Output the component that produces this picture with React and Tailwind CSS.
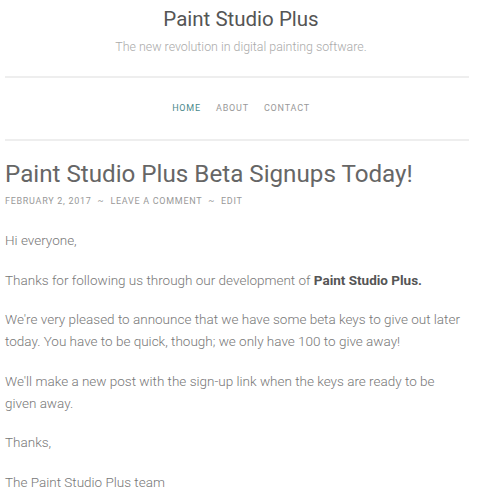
import React from 'react';

const NAV = ['Home', 'About', 'Contact'];

export default function App() {
  return (
    <div className="w-[482px] h-[500px] overflow-hidden bg-white font-['Roboto',sans-serif] text-[#777]">
      {/* Site header */}
      <header className="px-[5px] pt-[6px] text-center">
        <h1 className="text-[20.5px] leading-[26px] text-[#555]">Paint Studio Plus</h1>
        <p className="mt-[7px] text-[12.4px] leading-[16px] font-light text-[#aaa]">The new revolution in digital painting software.</p>
        <div className="mt-[21px] w-[464px] h-[2px] bg-[#eee]" />
        <nav className="flex justify-center gap-[15px] pt-[24px] pb-[25px] text-[9px] leading-[12px] tracking-[0.09em] uppercase">
          {NAV.map((n, i) => (
            <a key={n} className={i === 0 ? 'text-[#4b8a8d]' : 'text-[#999]'}>{n}</a>
          ))}
        </nav>
        <div className="w-[464px] h-[2px] bg-[#eee]" />
      </header>

      {/* Post */}
      <article className="px-[5px] pt-[18px]">
        <h2 className="text-[24.2px] leading-[30px] text-[#666]">Paint Studio Plus Beta Signups Today!</h2>
        <div className="mt-[6px] text-[9px] leading-[12px] tracking-[0.08em] uppercase text-[#999]">
          February 2, 2017 <span className="mx-[3px]">~</span> Leave a comment <span className="mx-[3px]">~</span> Edit
        </div>
        <div className="mt-[22px] w-[460px] text-[13.5px] leading-[22px] font-light space-y-[17.6px]">
          <p>Hi everyone,</p>
          <p>Thanks for following us through our development of <strong className="font-bold text-[#555]">Paint Studio Plus.</strong></p>
          <p>We're very pleased to announce that we have some beta keys to give out later today. You have to be quick, though; we only have 100 to give away!</p>
          <p>We'll make a new post with the sign-up link when the keys are ready to be given away.</p>
          <p>Thanks,</p>
          <p>The Paint Studio Plus team</p>
        </div>
      </article>
    </div>
  );
}
